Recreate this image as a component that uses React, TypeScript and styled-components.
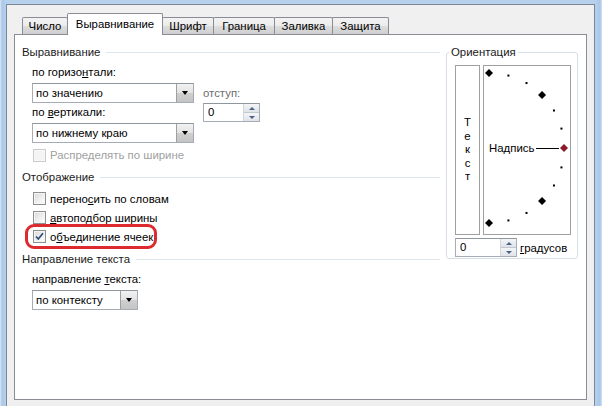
import React from "react"
import styled, { createGlobalStyle } from "styled-components"

const GlobalStyle = createGlobalStyle`
  html, body {
    margin: 0;
    padding: 0;
    background: #f0f0f0;
  }
  body {
    font-family: "Liberation Sans", Arial, sans-serif;
    font-size: 11.4px;
    color: #000;
  }
`

const Frame = styled.div`
  width: 602px;
  height: 406px;
  box-sizing: border-box;
  padding: 4px 7px 0 6px;
  display: flex;
  background: linear-gradient(90deg, #dfe8f2 0px, #a9c7e8 2px, #b7d1ec 6px, #b7d1ec 595px, #a9c7e8 600px, #d6e3f0 602px);
`

const Dialog = styled.div`
  flex: 1;
  display: flex;
  flex-direction: column;
  background: #f0f0f0;
  border: 1px solid #7b8794;
  border-bottom: none;
  padding: 8px 7px 6px 7px;
`

const TabStrip = styled.div`
  display: flex;
  align-items: flex-end;
  height: 22px;
  padding-left: 8px;
  margin-bottom: -1px;
  position: relative;
  z-index: 1;
`

const Tab = styled.div<{ $width: number; $active?: boolean }>`
  box-sizing: border-box;
  width: ${p => p.$width}px;
  height: ${p => (p.$active ? 22 : 17)}px;
  margin-bottom: ${p => (p.$active ? 0 : 1)}px;
  margin-left: -1px;
  display: flex;
  align-items: center;
  justify-content: center;
  padding-bottom: ${p => (p.$active ? 1 : 0)}px;
  border: 1px solid #898c95;
  border-bottom: none;
  border-radius: 2px 2px 0 0;
  background: ${p =>
    p.$active ? "#fff" : "linear-gradient(#f3f3f3, #ebebeb 50%, #dddddd 51%, #cfcfcf)"};
  position: relative;
  z-index: ${p => (p.$active ? 2 : 1)};
  &:first-child {
    margin-left: 0;
  }
`

const Panel = styled.div`
  flex: 1;
  display: flex;
  background: #fff;
  border: 1px solid #898c95;
  padding: 9px 8px 0 7px;
`

const LeftColumn = styled.div`
  width: 418px;
  display: flex;
  flex-direction: column;
  align-items: flex-start;
`

const GroupTitle = styled.div<{ $top?: number }>`
  align-self: stretch;
  display: flex;
  align-items: center;
  height: 16px;
  margin-top: ${p => p.$top ?? 0}px;
  color: #1a1a1a;
  white-space: nowrap;
  &::after {
    content: "";
    flex: 1;
    height: 1px;
    margin-left: 6px;
    background: #dde4ea;
  }
`

const Label = styled.div<{ $top?: number; $dim?: boolean }>`
  height: 16px;
  line-height: 16px;
  margin-top: ${p => p.$top ?? 0}px;
  margin-left: 10px;
  color: ${p => (p.$dim ? "#6d6d6d" : "#000")};
  white-space: nowrap;
`

const AlignGrid = styled.div`
  display: grid;
  grid-template-columns: 171px auto;
  margin-left: 10px;
  margin-top: 4px;
`

const GridLabel = styled.div<{ $dim?: boolean }>`
  height: 16px;
  line-height: 16px;
  white-space: nowrap;
  color: ${p => (p.$dim ? "#6d6d6d" : "#000")};
`

const SelectBox = styled.div<{ $width: number; $top?: number; $left?: number }>`
  box-sizing: border-box;
  width: ${p => p.$width}px;
  height: 20px;
  margin-top: ${p => p.$top ?? 0}px;
  margin-left: ${p => p.$left ?? 0}px;
  display: flex;
  align-items: stretch;
  background: #fff;
  border: 1px solid #a5acb5;
  border-top-color: #8f969f;
`

const SelectText = styled.div`
  flex: 1;
  padding-left: 3px;
  line-height: 18px;
  white-space: nowrap;
  overflow: hidden;
`

const DropButton = styled.div`
  box-sizing: border-box;
  width: 17px;
  display: flex;
  align-items: center;
  justify-content: center;
  border-left: 1px solid #9aa0a6;
  background: linear-gradient(#f2f2f2, #e2e2e2 50%, #cfcfcf 51%, #c4c4c4);
  &::before {
    content: "";
    border-left: 3.5px solid transparent;
    border-right: 3.5px solid transparent;
    border-top: 4px solid #000;
  }
`

const SpinBox = styled.div<{ $width: number }>`
  box-sizing: border-box;
  width: ${p => p.$width}px;
  height: 19px;
  display: flex;
  background: #fff;
  border: 1px solid #a5acb5;
  border-top-color: #8f969f;
`

const SpinValue = styled.div`
  flex: 1;
  padding-left: 4px;
  line-height: 17px;
`

const SpinButtons = styled.div`
  width: 15px;
  display: flex;
  flex-direction: column;
  border-left: 1px solid #d3d7dc;
`

const SpinArrow = styled.div<{ $down?: boolean }>`
  flex: 1;
  display: flex;
  align-items: center;
  justify-content: center;
  background: linear-gradient(#f4f5f7, #dfe3e8);
  border-top: ${p => (p.$down ? "1px solid #c2c8cf" : "none")};
  &::before {
    content: "";
    border-left: 3px solid transparent;
    border-right: 3px solid transparent;
    ${p =>
      p.$down ? "border-top: 3px solid #4d6185;" : "border-bottom: 3px solid #4d6185;"}
  }
`

const CheckRow = styled.div<{ $top?: number; $height?: number; $disabled?: boolean; $marked?: boolean }>`
  display: inline-flex;
  align-items: center;
  gap: 4px;
  height: ${p => p.$height ?? 19}px;
  margin-top: ${p => p.$top ?? 0}px;
  margin-left: ${p => (p.$marked ? 6 : 11)}px;
  padding: ${p => (p.$marked ? "0 1px 0 5px" : "0")};
  color: ${p => (p.$disabled ? "#a0a0a0" : "#000")};
  white-space: nowrap;
  outline: ${p => (p.$marked ? "3px solid #dd2a2e" : "none")};
  border-radius: 6px;
`

const Box = styled.span<{ $disabled?: boolean }>`
  box-sizing: border-box;
  width: 13px;
  height: 13px;
  display: flex;
  align-items: center;
  justify-content: center;
  border: 1px solid ${p => (p.$disabled ? "#cbcbcb" : "#8e8f8f")};
  background: ${p =>
    p.$disabled ? "#f4f4f4" : "linear-gradient(135deg, #d8d8d8, #f1f1f1 60%, #ffffff)"};
  box-shadow: inset 0 0 0 1px ${p => (p.$disabled ? "#f7f7f7" : "#f4f4f4")};
`

const OrientationGroup = styled.fieldset`
  box-sizing: border-box;
  width: 132px;
  height: 215px;
  margin: 0 0 0 6px;
  padding: 5px 6px 0 8px;
  border: 1px solid #d5dfe5;
  border-radius: 3px;
  min-width: 0;
`

const Legend = styled.legend`
  padding: 0 2px;
  margin-left: -6px;
  line-height: 16px;
  color: #1a1a1a;
`

const OrientationBody = styled.div`
  display: flex;
  gap: 3px;
  height: 170px;
`

const VerticalText = styled.div`
  box-sizing: border-box;
  width: 25px;
  display: flex;
  flex-direction: column;
  align-items: center;
  justify-content: center;
  border: 1px solid #a0a0a0;
  line-height: 13.5px;
`

const Dial = styled.div`
  box-sizing: border-box;
  width: 88px;
  border: 1px solid #a0a0a0;
  display: flex;
`

const DegreeRow = styled.div`
  display: flex;
  align-items: center;
  gap: 3px;
  margin-top: 3px;
`

const DIAL_POINTS = [90, 75, 60, 45, 30, 15, 0, -15, -30, -45, -60, -75, -90]

const DialDrawing = () => {
  const cx = 5
  const cy = 82
  const r = 75
  return (
    <svg width="86" height="168" viewBox="0 0 86 168">
      {DIAL_POINTS.map(a => {
        const rad = (a * Math.PI) / 180
        const x = cx + r * Math.cos(rad)
        const y = cy - r * Math.sin(rad)
        if (a === 0) {
          return (
            <polygon
              key={a}
              points={`${x},${y - 4} ${x + 4},${y} ${x},${y + 4} ${x - 4},${y}`}
              fill="#8c1c2c"
            />
          )
        }
        if (a % 45 === 0) {
          return (
            <polygon
              key={a}
              points={`${x},${y - 4} ${x + 4},${y} ${x},${y + 4} ${x - 4},${y}`}
              fill="#000"
            />
          )
        }
        return <rect key={a} x={x - 1} y={y - 1} width="2" height="2" fill="#000" />
      })}
      <line x1="52" y1={cy + 0.5} x2="75" y2={cy + 0.5} stroke="#000" strokeWidth="1" />
      <text
        x="5"
        y={cy + 4}
        fontFamily='"Liberation Sans", Arial, sans-serif'
        fontSize="11.4"
        fill="#000"
      >
        Надпись
      </text>
    </svg>
  )
}

const Check = () => (
  <svg width="11" height="11" viewBox="0 0 11 11">
    <path d="M2 5.5 L4.3 8 L9 2.2" fill="none" stroke="#2f4a7c" strokeWidth="1.7" />
  </svg>
)

const Select = ({ width, text, top, left }: { width: number; text: string; top?: number; left?: number }) => (
  <SelectBox $width={width} $top={top} $left={left}>
    <SelectText>{text}</SelectText>
    <DropButton />
  </SelectBox>
)

const Spinner = ({ width, value }: { width: number; value: string }) => (
  <SpinBox $width={width}>
    <SpinValue>{value}</SpinValue>
    <SpinButtons>
      <SpinArrow />
      <SpinArrow $down />
    </SpinButtons>
  </SpinBox>
)

const TABS = [
  { label: "Число", width: 46 },
  { label: "Выравнивание", width: 96, active: true },
  { label: "Шрифт", width: 52 },
  { label: "Граница", width: 62 },
  { label: "Заливка", width: 59 },
  { label: "Защита", width: 57 },
]

export default function App() {
  return (
    <>
      <GlobalStyle />
      <Frame>
        <Dialog>
          <TabStrip>
            {TABS.map(t => (
              <Tab key={t.label} $width={t.width} $active={t.active}>
                {t.label}
              </Tab>
            ))}
          </TabStrip>
          <Panel>
            <LeftColumn>
              <GroupTitle>Выравнивание</GroupTitle>
              <AlignGrid>
                <GridLabel style={{ marginBottom: 3 }}>
                  по горизо<u>н</u>тали:
                </GridLabel>
                <div />
                <Select width={162} text="по значению" />
                <GridLabel $dim style={{ alignSelf: "center" }}>
                  отступ:
                </GridLabel>
                <GridLabel style={{ marginTop: 1, marginBottom: 3 }}>
                  по <u>в</u>ертикали:
                </GridLabel>
                <Spinner width={57} value="0" />
                <Select width={162} text="по нижнему краю" />
              </AlignGrid>
              <CheckRow $disabled $top={4} $height={16}>
                <Box $disabled />
                Распределять по ширине
              </CheckRow>

              <GroupTitle $top={6}>Отображение</GroupTitle>
              <CheckRow $top={4}>
                <Box />
                <span>
                  перено<u>с</u>ить по словам
                </span>
              </CheckRow>
              <CheckRow>
                <Box />
                <span>
                  <u>а</u>втоподбор ширины
                </span>
              </CheckRow>
              <CheckRow $marked>
                <Box>
                  <Check />
                </Box>
                <span>
                  о<u>б</u>ъединение ячеек
                </span>
              </CheckRow>

              <GroupTitle $top={5}>Направление текста</GroupTitle>
              <Label $top={4}>
                направление <u>т</u>екста:
              </Label>
              <Select width={106} text="по контексту" top={3} left={10} />
            </LeftColumn>

            <OrientationGroup>
              <Legend>Ориентация</Legend>
              <OrientationBody>
                <VerticalText>
                  {"Текст".split("").map((c, i) => (
                    <span key={i}>{c}</span>
                  ))}
                </VerticalText>
                <Dial>
                  <DialDrawing />
                </Dial>
              </OrientationBody>
              <DegreeRow>
                <Spinner width={62} value="0" />
                <span>
                  <u>г</u>радусов
                </span>
              </DegreeRow>
            </OrientationGroup>
          </Panel>
        </Dialog>
      </Frame>
    </>
  )
}
